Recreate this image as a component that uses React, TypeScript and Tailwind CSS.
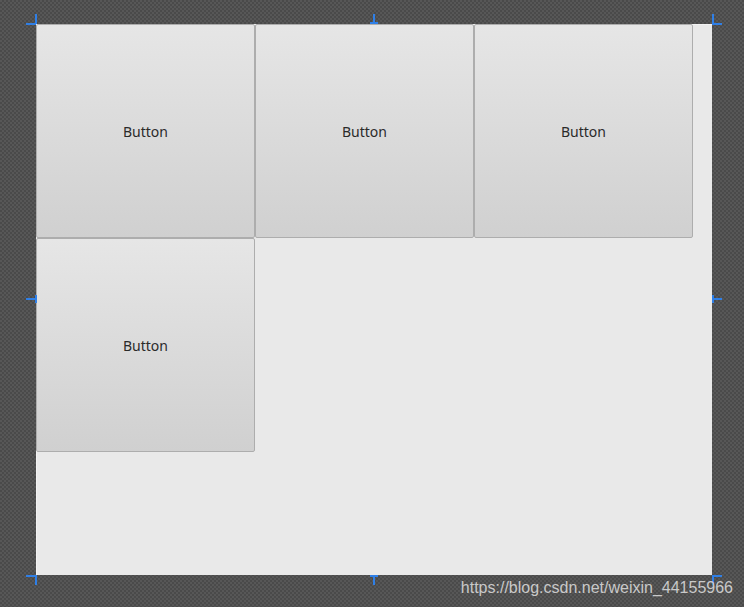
import React from 'react';

const TICK = 'absolute bg-[#2f7fe6]';

function Button() {
  return (
    <button className="flex items-center justify-center w-[219px] h-[214px] border border-[#adadad] rounded-[2px] bg-gradient-to-b from-[#e6e6e6] to-[#d0d0d0] text-[14px] text-[#2a2a2a] font-['Noto_Sans',sans-serif]">
      Button
    </button>
  );
}

export default function App() {
  return (
    <div className="relative w-[744px] h-[607px] overflow-hidden bg-[#505050] bg-[repeating-conic-gradient(#4a4a4a_0%_25%,#575757_0%_50%)] bg-size-[4px_4px] pt-[24px] pl-[36px]">
      {/* design surface */}
      <div className="w-[676px] h-[551px] bg-[#e9e9e9] border-t border-l border-[#f2f2f2]">
        <div className="grid grid-cols-[219px_219px_219px] -mt-px -ml-px">
          <Button />
          <Button />
          <Button />
          <Button />
        </div>
      </div>

      {/* selection ticks */}
      <div className={`${TICK} left-[35px] top-[14px] w-[2px] h-[10px]`} />
      <div className={`${TICK} left-[26px] top-[23px] w-[10px] h-[2px]`} />
      <div className={`${TICK} left-[373px] top-[14px] w-[2px] h-[10px]`} />
      <div className={`${TICK} left-[370px] top-[22px] w-[8px] h-[2px]`} />
      <div className={`${TICK} left-[712px] top-[14px] w-[2px] h-[10px]`} />
      <div className={`${TICK} left-[712px] top-[23px] w-[10px] h-[2px]`} />

      <div className={`${TICK} left-[26px] top-[298px] w-[10px] h-[2px]`} />
      <div className={`${TICK} left-[35px] top-[295px] w-[2px] h-[8px]`} />
      <div className={`${TICK} left-[712px] top-[298px] w-[10px] h-[2px]`} />
      <div className={`${TICK} left-[712px] top-[295px] w-[2px] h-[8px]`} />

      <div className={`${TICK} left-[26px] top-[575px] w-[10px] h-[2px]`} />
      <div className={`${TICK} left-[35px] top-[575px] w-[2px] h-[10px]`} />
      <div className={`${TICK} left-[373px] top-[575px] w-[2px] h-[10px]`} />
      <div className={`${TICK} left-[370px] top-[575px] w-[8px] h-[2px]`} />
      <div className={`${TICK} left-[712px] top-[575px] w-[10px] h-[2px]`} />
      <div className={`${TICK} left-[712px] top-[575px] w-[2px] h-[10px]`} />

      {/* watermark */}
      <div className="absolute right-[11px] top-[576px] text-[16px] leading-[24px] text-[#c9c9c9] font-['Liberation_Sans',Arial,sans-serif] whitespace-nowrap">
        https://blog.csdn.net/weixin_44155966
      </div>
    </div>
  );
}
